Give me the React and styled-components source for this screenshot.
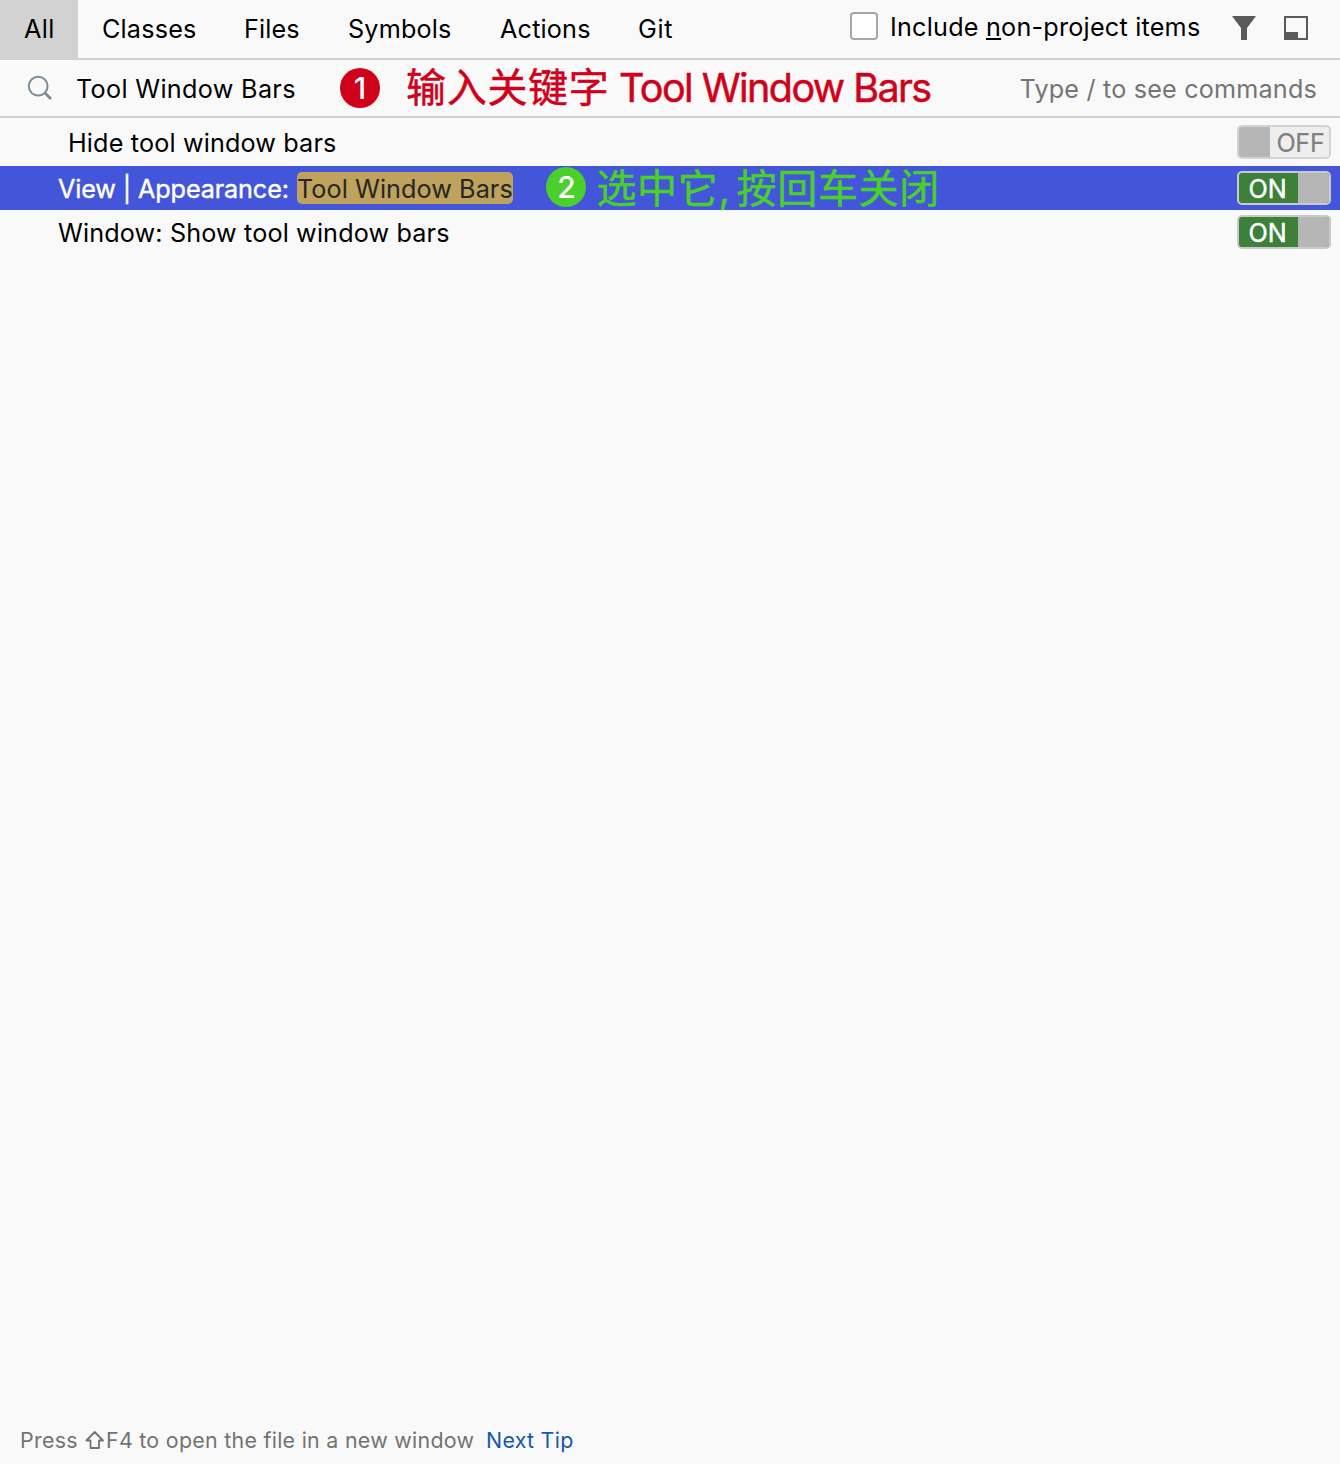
import React from "react";
import styled, { createGlobalStyle } from "styled-components";

const GlobalStyle = createGlobalStyle`
  * { box-sizing: border-box; }
  body { margin: 0; background: #f9f9f9; }
`;

const Popup = styled.div`
  width: 1340px;
  height: 1464px;
  display: flex;
  flex-direction: column;
  background: #f9f9f9;
  color: #000;
  font: 400 25.2px/30px Inter, "Noto Sans CJK SC", sans-serif;
  white-space: pre;
  overflow: hidden;
`;

const Header = styled.header`
  display: flex;
  height: 60px;
  border-bottom: 2px solid #d1d1d1;
`;

const Tab = styled.div`
  width: ${(p) => p.$width}px;
  height: ${(p) => (p.$active ? 60 : 58)}px;
  padding: 14px 0 0 24px;
  background: ${(p) => (p.$active ? "#d2d2d2" : "transparent")};
  letter-spacing: ${(p) => p.$spacing}px;
`;

const Options = styled.div`
  display: flex;
  align-items: flex-start;
  margin-left: auto;
  padding: 12px 32px 0 0;
`;

const Checkbox = styled.span`
  width: 28px;
  height: 28px;
  border: 2px solid #a6a6a6;
  border-radius: 4px;
  background: #fff;
`;

const OptionLabel = styled.label`
  width: 342px;
  padding-left: 12px;
  letter-spacing: 0.22px;
`;

const Mnemonic = styled.span`
  text-decoration: underline;
  text-decoration-thickness: 2px;
  text-underline-offset: 2px;
  text-decoration-skip-ink: none;
`;

const ToolIcon = styled.svg`
  display: block;
  width: 24px;
  height: 24px;
  margin: 4px 0 0 ${(p) => p.$gap}px;
`;

const SearchRow = styled.div`
  display: flex;
  align-items: center;
  height: 58px;
  padding: 0 23px 0 27px;
  border-bottom: 2px solid #d1d1d1;
`;

const SearchIcon = styled.svg`
  width: 26px;
  height: 26px;
  margin-right: 23px;
`;

const Query = styled.span`
  width: 264px;
  padding-top: 2px;
  letter-spacing: 0.32px;
`;

const Hint = styled.span`
  margin-left: auto;
  padding-top: 2px;
  color: #757575;
  letter-spacing: 0.18px;
`;

const Step = styled.span`
  display: flex;
  align-items: center;
  justify-content: center;
  width: 40px;
  height: 40px;
  margin-right: ${(p) => p.$gap}px;
  margin-top: ${(p) => p.$shift || 0}px;
  border-radius: 50%;
  background: ${(p) => p.$color};
  color: #fff;
  font-size: 30px;
  font-weight: 500;
`;

const Note = styled.span`
  display: flex;
  align-items: center;
  height: 40px;
  padding-top: ${(p) => p.$drop || 0}px;
  color: ${(p) => p.$color};
  font-size: 40px;
  line-height: 40px;
  letter-spacing: 0.7px;
  -webkit-text-stroke: 0.5px currentColor;
`;

const NoteLatin = styled.span`
  margin-left: 9.5px;
  font-size: 39.5px;
  letter-spacing: -1.56px;
`;

const Comma = styled.span`
  width: 18px;
`;

const Results = styled.main`
  flex: 1;
`;

const Row = styled.div`
  display: flex;
  align-items: center;
  height: ${(p) => p.$height}px;
  padding: 0 8.6px 0 ${(p) => p.$indent}px;
  background: ${(p) => (p.$selected ? "#4355d9" : "transparent")};
  color: ${(p) => (p.$selected ? "#fff" : "#000")};
`;

const RowText = styled.span`
  letter-spacing: ${(p) => p.$spacing}px;
  padding-top: 2px;
`;

const Prefix = styled(RowText)`
  width: 239px;
  -webkit-text-stroke: 0.4px currentColor;
`;

const Match = styled.span`
  width: 216px;
  height: 32px;
  margin-right: 33.4px;
  border-radius: 5px;
  background: #bfa25b;
  color: #262626;
  line-height: 34px;
  letter-spacing: 0.07px;
`;

const Toggle = styled.span`
  display: flex;
  width: 94px;
  height: 34px;
  margin-left: auto;
  border: 2px solid ${(p) => (p.$on ? "#c9c9c9" : "#d3d3d3")};
  border-radius: 5px;
  background: ${(p) => (p.$on ? "#3c8039" : "#eeeeee")};
  color: ${(p) => (p.$on ? "#fff" : "#808080")};
  overflow: hidden;
`;

const Knob = styled.span`
  width: 31px;
  background: #b6b6b6;
`;

const ToggleText = styled.span`
  flex: 1;
  padding-left: ${(p) => (p.$on ? 9 : 6)}px;
  line-height: 32px;
  letter-spacing: ${(p) => (p.$on ? 0.2 : -0.3)}px;
  -webkit-text-stroke: ${(p) => (p.$on ? 0.4 : 0.2)}px currentColor;
`;

const Footer = styled.footer`
  display: flex;
  align-items: center;
  height: 46px;
  padding: 0 20px 2px;
  color: #737373;
  font-size: 21.4px;
  letter-spacing: 0.28px;
`;

const ShiftIcon = styled.svg`
  width: 22px;
  height: 20px;
`;

const FooterText = styled.span`
  width: ${(p) => p.$width}px;
`;

const TipLink = styled.a`
  color: #1758a8;
`;

const TABS = [
  ["All", 78, 0.4],
  ["Classes", 142, 0.18],
  ["Files", 104, 0.15],
  ["Symbols", 152, 0.18],
  ["Actions", 138, 0.18],
  ["Git", 84, 0.7],
];

function Switch({ on }) {
  return (
    <Toggle $on={on}>
      {!on && <Knob />}
      <ToggleText $on={on}>{on ? "ON" : "OFF"}</ToggleText>
      {on && <Knob />}
    </Toggle>
  );
}

export default function App() {
  return (
    <Popup>
      <GlobalStyle />
      <Header>
        {TABS.map(([name, width, spacing], i) => (
          <Tab key={name} $width={width} $spacing={spacing} $active={i === 0}>{name}</Tab>
        ))}
        <Options>
          <Checkbox />
          <OptionLabel>Include <Mnemonic>n</Mnemonic>on-project items</OptionLabel>
          <ToolIcon viewBox="0 0 24 24" $gap={12}>
            <path d="M0 0H24L15 12V24H9V12Z" fill="#5a5a5a" />
          </ToolIcon>
          <ToolIcon viewBox="0 0 24 24" $gap={28}>
            <path d="M0 0H24V24H0ZM2 2V16H14V22H22V2Z" fill="#5a5a5a" fillRule="evenodd" />
          </ToolIcon>
        </Options>
      </Header>
      <SearchRow>
        <SearchIcon viewBox="0 0 26 26" fill="none" stroke="#7d8b93">
          <circle cx="11.2" cy="11.2" r="9.4" strokeWidth="2" />
          <path d="M17.8 17.8L24 24" strokeWidth="2.8" />
        </SearchIcon>
        <Query>Tool Window Bars</Query>
        <Step $color="#d0021b" $gap={26}>1</Step>
        <Note $color="#d0021b">输入关键字<NoteLatin>Tool Window Bars</NoteLatin></Note>
        <Hint>Type / to see commands</Hint>
      </SearchRow>
      <Results>
        <Row $height={48} $indent={68}>
          <RowText $spacing={0.15}>Hide tool window bars</RowText>
          <Switch />
        </Row>
        <Row $height={44} $indent={58} $selected>
          <Prefix $spacing={-0.12}>View | Appearance:</Prefix>
          <Match>Tool Window Bars</Match>
          <Step $color="#4acf2b" $gap={10} $shift={-2}>2</Step>
          <Note $color="#4acf2b" $drop={1}>选中它<Comma>,</Comma>按回车关闭</Note>
          <Switch on />
        </Row>
        <Row $height={44} $indent={58}>
          <RowText $spacing={0.14}>Window: Show tool window bars</RowText>
          <Switch on />
        </Row>
      </Results>
      <Footer>
        <FooterText $width={64}>Press</FooterText>
        <ShiftIcon viewBox="0 0 22 20">
          <path d="M10.7 2L19 10.5H15V18H6.5V10.5H2.4Z" fill="none" stroke="#737373" strokeWidth="1.8" strokeLinejoin="round" />
        </ShiftIcon>
        <FooterText $width={380}>F4 to open the file in a new window</FooterText>
        <TipLink>Next Tip</TipLink>
      </Footer>
    </Popup>
  );
}
